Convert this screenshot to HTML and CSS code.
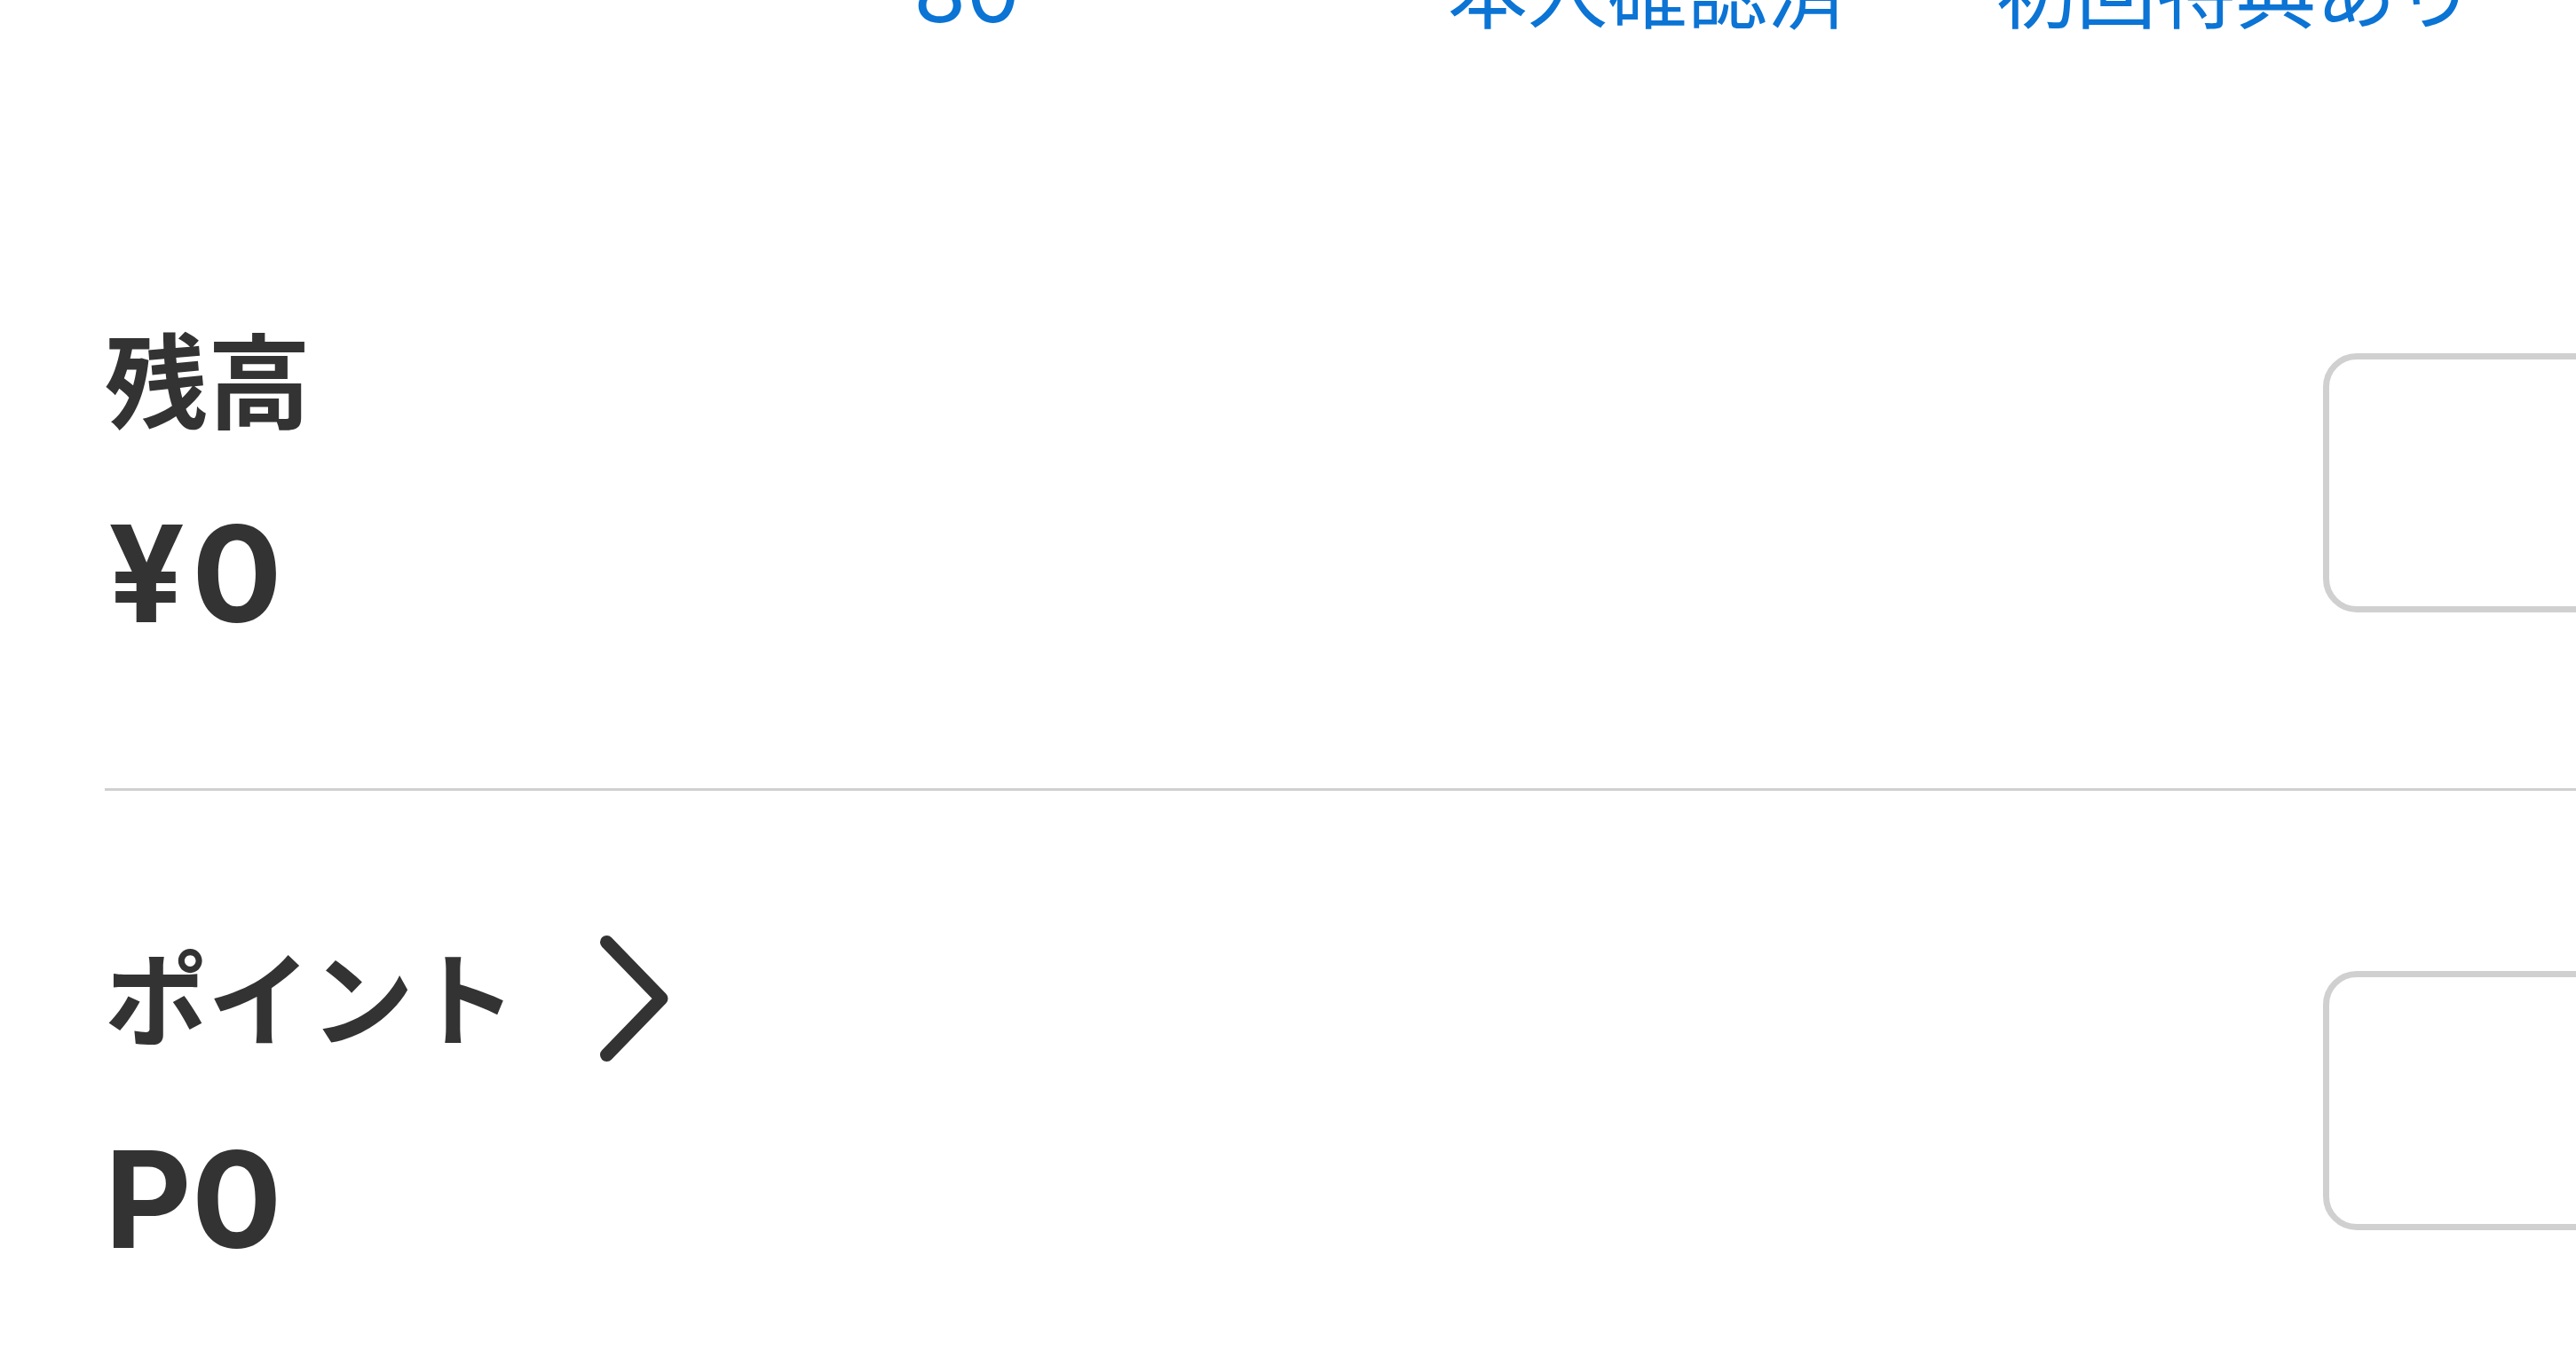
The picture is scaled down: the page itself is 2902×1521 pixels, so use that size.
FILE: index.html
```html
<!doctype html>
<html lang="ja">

<head>
    <meta charset="UTF-8" />
    <meta name="viewport" content="width=device-width, initial-scale=1.0" />
    <title>残高</title>
    <link rel="stylesheet" href="styles.css">
</head>

<body>
    <div class="page">
        <div class="stats">
            <span class="stat stat-number">80</span>
            <span class="stat">本人確認済</span>
            <span class="stat">初回特典あり</span>
        </div>

        <div class="balance-list">
            <section class="balance-row">
                <div class="balance-info">
                    <div class="balance-label">
                        <span>残高</span>
                    </div>
                    <div class="balance-value balance-value-yen">¥0</div>
                </div>
                <div class="balance-box"></div>
            </section>

            <section class="balance-row">
                <div class="balance-info">
                    <a href="#" class="balance-label">
                        <span>ポイント</span>
                        <svg class="chevron" width="96" height="160" viewBox="0 0 96 160" fill="none"
                            stroke="currentColor" stroke-width="15" stroke-linecap="round" stroke-linejoin="round">
                            <polyline points="17.5 22.5 79 86 17.5 149.5"></polyline>
                        </svg>
                    </a>
                    <div class="balance-value">P0</div>
                </div>
                <div class="balance-box balance-box-low"></div>
            </section>
        </div>
    </div>
</body>

</html>
```

FILE: styles.css
```css
:root {
    --text-primary: #333333;
    --accent: #0b74d4;
    --border: #d0d0d0;
    --font-jp: "Noto Sans CJK JP", "Noto Sans", sans-serif;
    --font-num: Inter, "Liberation Sans", "Noto Sans CJK JP", sans-serif;
}

* {
    box-sizing: border-box;
    margin: 0;
    padding: 0;
}

html,
body {
    background-color: #ffffff;
    overflow: hidden;
}

body {
    font-family: var(--font-jp);
    color: var(--text-primary);
    min-height: 100vh;
}

.page {
    overflow: hidden;
    min-height: 100vh;
}

.stats {
    display: grid;
    grid-template-columns: 602px 618px auto;
    align-items: baseline;
    height: 90px;
    margin-top: -59px;
    padding-left: 1029px;
    color: var(--accent);
    font-size: 90px;
    line-height: 1;
}

.stat-number {
    font-family: var(--font-num);
    font-size: 96px;
}

.balance-list {
    margin-top: 186px;
    padding-left: 118px;
}

.balance-row {
    display: flex;
    align-items: center;
    justify-content: space-between;
    padding: 148px 0 166px;
}

.balance-row + .balance-row {
    border-top: 3px solid var(--border);
}

.balance-info {
    display: flex;
    flex-direction: column;
    align-items: flex-start;
}

.balance-label {
    display: flex;
    align-items: center;
    gap: 84px;
    font-size: 116px;
    font-weight: 700;
    line-height: 1;
    color: var(--text-primary);
    text-decoration: none;
}

.chevron {
    display: block;
}

.balance-value {
    margin-top: 90px;
    font-family: var(--font-num);
    font-size: 151px;
    font-weight: 700;
    line-height: 1;
}

.balance-value-yen {
    padding-left: 4px;
    letter-spacing: 8px;
}

a.balance-label + .balance-value {
    margin-top: 77px;
}

.balance-box {
    flex: 0 0 600px;
    height: 292px;
    margin-right: -315px;
    border: 7px solid var(--border);
    border-radius: 38px;
    background-color: #ffffff;
}

.balance-box-low {
    margin-top: 14px;
}
```
